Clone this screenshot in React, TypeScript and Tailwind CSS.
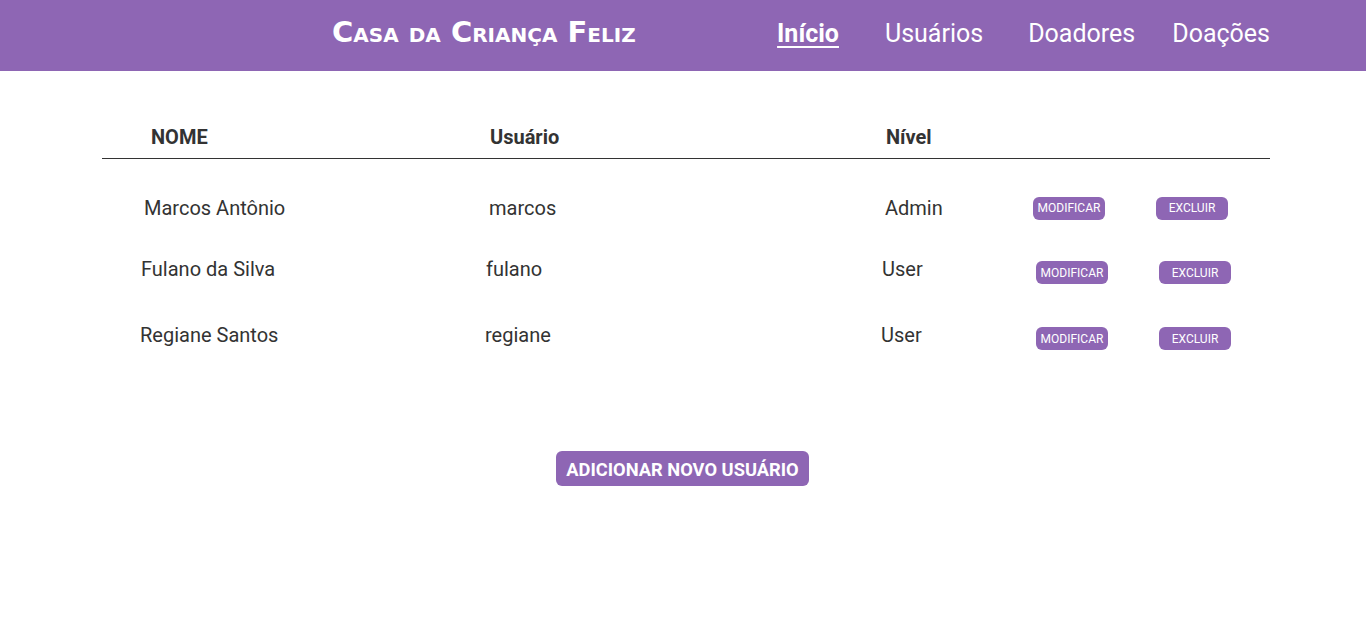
import React from 'react'

const usuarios = [
    { nome: 'Marcos Antônio', usuario: 'marcos', nivel: 'Admin', row: 'mt-[29px] pl-[42px]', nivelW: 'w-[148px]', btn: '' },
    { nome: 'Fulano da Silva', usuario: 'fulano', nivel: 'User', row: 'mt-[21px] pl-[39px]', nivelW: 'w-[154px]', btn: 'mt-[7px]' },
    { nome: 'Regiane Santos', usuario: 'regiane', nivel: 'User', row: 'mt-[26px] pl-[38px]', nivelW: 'w-[155px]', btn: 'mt-[7px]' },
]

const App = () => {
    return (
        <div className="min-h-[636px] bg-white font-['Roboto',sans-serif] text-[#333]">
            {/* Header */}
            <header className="h-[71px] bg-[#8e66b4] flex items-center text-white">
                <h1 className="ml-[332px] font-['DejaVu_Sans',sans-serif] font-bold text-[29px] [font-variant:small-caps] leading-none pb-[6px]">
                    Casa da Criança Feliz
                </h1>
                <nav className="ml-auto mr-[96px] flex items-center text-[25px] pb-[4px]">
                    <a className="font-bold underline decoration-2 underline-offset-[4px]">Início</a>
                    <a className="ml-[46px]">Usuários</a>
                    <a className="ml-[45px]">Doadores</a>
                    <a className="ml-[37px]">Doações</a>
                </nav>
            </header>

            {/* Tabela */}
            <div className="mx-[96px] ml-[102px] mt-[47px]">
                <div className="h-[41px] flex items-center border-b border-[#333] text-[20px] font-bold pl-[49px] pb-[2px]">
                    <p className="w-[339px]">NOME</p>
                    <p className="w-[396px]">Usuário</p>
                    <p>Nível</p>
                </div>
                {usuarios.map((u, idx) => (
                    <div key={idx} className={`h-[40px] flex items-center text-[20px] ${u.row}`}>
                        <p className="w-[345px]">{u.nome}</p>
                        <p className="w-[396px]">{u.usuario}</p>
                        <p className={u.nivelW}>{u.nivel}</p>
                        <button className={`w-[72px] h-[23px] rounded-md bg-[#8e66b4] text-white text-[12px] leading-none ${u.btn}`}>MODIFICAR</button>
                        <button className={`ml-[51px] w-[72px] h-[23px] rounded-md bg-[#8e66b4] text-white text-[12px] leading-none ${u.btn}`}>EXCLUIR</button>
                    </div>
                ))}
            </div>

            <div className="flex justify-center mt-[96px] pr-[1px]">
                <button className="w-[253px] h-[35px] pt-[2px] rounded-md bg-[#8e66b4] text-white text-[18.3px] font-bold">
                    ADICIONAR NOVO USUÁRIO
                </button>
            </div>
        </div>
    )
}

export default App
